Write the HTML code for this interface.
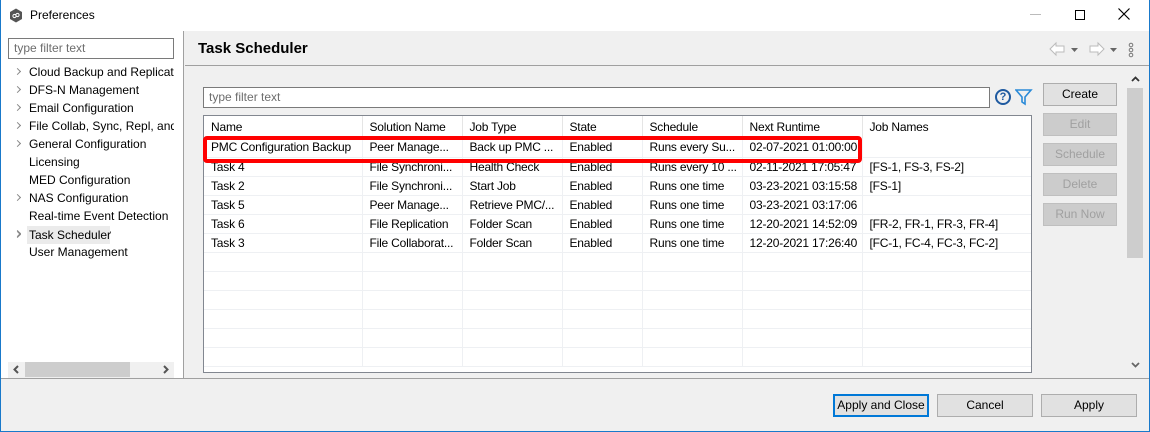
<!DOCTYPE html><html><head><style>
*{box-sizing:border-box;margin:0;padding:0}
body{width:1150px;height:432px;overflow:hidden;font-family:"Liberation Sans",sans-serif;font-size:12px;color:#000;background:#f0f0f0;position:relative}
.a{position:absolute}
.btn{position:absolute;background:#e1e1e1;border:1px solid #adadad;text-align:center;line-height:20px;font-size:12px}
.dis{color:#a0a0a0;background:#cccccc;border-color:#bfbfbf}
.tree div{height:18px;line-height:18px;padding-left:29px;position:relative;white-space:nowrap}
.tree .c:before{content:"";position:absolute;left:15px;top:6px;width:4px;height:4px;border-right:1px solid #888;border-top:1px solid #888;transform:rotate(45deg)}
table{border-collapse:collapse;table-layout:fixed}
td{height:19px;padding-left:7px;white-space:nowrap;overflow:hidden;border-right:1px solid #eef0f3;border-bottom:1px solid #eef0f3;font-size:12px;letter-spacing:-0.2px}
th{height:22px;padding-left:7px;text-align:left;font-weight:normal;border-right:1px solid #e5e5e5;letter-spacing:-0.2px;vertical-align:middle}
</style></head><body>
<div class="a" style="left:0;top:0;width:1150px;height:432px;border:1px solid #1979ca;border-top:none"></div>
<div class="a" style="left:1px;top:0;width:1148px;height:31px;background:#fff"></div>
<svg class="a" style="left:9px;top:8px" width="14" height="15"><path d="M7 0.5l6 3.5v7l-6 3.5l-6-3.5v-7z" fill="#555"/><circle cx="5.5" cy="8" r="1.6" fill="none" stroke="#fff"/><circle cx="8.5" cy="7" r="1.6" fill="none" stroke="#fff"/></svg>
<div class="a" style="left:30px;top:8px;font-size:12px">Preferences</div>
<div class="a" style="left:1030px;top:14px;width:11px;height:1px;background:#bbb"></div>
<div class="a" style="left:1075px;top:10px;width:10px;height:10px;border:1px solid #000"></div>
<svg class="a" style="left:1118px;top:8px" width="12" height="12"><path d="M0.5 0.5l11 11M11.5 0.5l-11 11" stroke="#000" stroke-width="1.2"/></svg>
<!-- left panel -->
<div class="a" style="left:1px;top:31px;width:183px;height:347px;background:#fff;border-right:1px solid #a0a0a0"></div>
<div class="a" style="left:8px;top:38px;width:166px;height:21px;border:1px solid #7a7a7a;color:#6d6d6d;padding-left:5px;line-height:19px">type filter text</div>
<div class="a tree" style="left:0;top:63px;width:174px;overflow:hidden">
<div class="c">Cloud Backup and Replicati</div><div class="c">DFS-N Management</div><div class="c">Email Configuration</div><div class="c">File Collab, Sync, Repl, and</div><div class="c">General Configuration</div><div>Licensing</div><div>MED Configuration</div><div class="c">NAS Configuration</div><div>Real-time Event Detection</div><div class="c">Task Scheduler</div><div>User Management</div></div>
<div class="a" style="left:27px;top:226px;width:83px;height:18px;background:#ebebeb"></div>
<div class="a tree" style="left:0;top:226px"><div class="c">Task Scheduler</div></div>
<div class="a" style="left:8px;top:362px;width:166px;height:16px;background:#f0f0f0"></div>
<div class="a" style="left:25px;top:362px;width:105px;height:15px;background:#cdcdcd"></div>
<svg class="a" style="left:13px;top:365px" width="6" height="9"><path d="M5 1L1.5 4.5L5 8" fill="none" stroke="#555" stroke-width="2"/></svg>
<svg class="a" style="left:163px;top:365px" width="6" height="9"><path d="M1 1L4.5 4.5L1 8" fill="none" stroke="#555" stroke-width="2"/></svg>
<!-- right header -->
<div class="a" style="left:185px;top:65px;width:964px;height:1px;background:#a0a0a0"></div>
<div class="a" style="left:198px;top:40px;font-size:15px;font-weight:bold">Task Scheduler</div>
<svg class="a" style="left:1048px;top:41px" width="80" height="16"><path d="M2 8l6-6v3h8v6h-8v3z" fill="#fff" stroke="#bbb"/><path d="M23 7h7l-3.5 4z" fill="#666"/><path d="M56 8l-6-6v3h-8v6h8v3z" fill="#fff" stroke="#bbb"/><path d="M62 7h7l-3.5 4z" fill="#666"/></svg>
<svg class="a" style="left:1128px;top:42px" width="6" height="16"><circle cx="3" cy="3" r="1.8" fill="none" stroke="#777"/><circle cx="3" cy="8" r="1.8" fill="none" stroke="#777"/><circle cx="3" cy="13" r="1.8" fill="none" stroke="#777"/></svg>
<!-- filter -->
<div class="a" style="left:203px;top:87px;width:787px;height:21px;background:#fff;border:1px solid #7a7a7a;color:#6d6d6d;padding-left:5px;line-height:19px">type filter text</div>
<div class="a" style="left:995px;top:89px;width:16px;height:16px;border:2px solid #1f5aa0;border-radius:50%;color:#1f5aa0;font-weight:bold;font-size:11px;text-align:center;line-height:12px">?</div>
<svg class="a" style="left:1015px;top:88px" width="18" height="18"><path d="M1 2h15l-6 7v7l-3-2v-5z" fill="none" stroke="#2a8ad8" stroke-width="1.6"/></svg>
<!-- table -->
<div class="a" style="left:203px;top:115px;width:829px;height:258px;background:#fff;border:1px solid #828790;overflow:hidden">
<table style="width:827px"><colgroup><col style="width:158px"><col style="width:100px"><col style="width:100px"><col style="width:80px"><col style="width:100px"><col style="width:120px"><col style="width:169px"></colgroup>
<tr><th>Name</th><th>Solution Name</th><th>Job Type</th><th>State</th><th>Schedule</th><th>Next Runtime</th><th>Job Names</th></tr>
<tr><td>PMC Configuration Backup</td><td>Peer Manage...</td><td>Back up PMC ...</td><td>Enabled</td><td>Runs every Su...</td><td>02-07-2021 01:00:00</td><td></td></tr>
<tr><td>Task 4</td><td>File Synchroni...</td><td>Health Check</td><td>Enabled</td><td>Runs every 10 ...</td><td>02-11-2021 17:05:47</td><td>[FS-1, FS-3, FS-2]</td></tr>
<tr><td>Task 2</td><td>File Synchroni...</td><td>Start Job</td><td>Enabled</td><td>Runs one time</td><td>03-23-2021 03:15:58</td><td>[FS-1]</td></tr>
<tr><td>Task 5</td><td>Peer Manage...</td><td>Retrieve PMC/...</td><td>Enabled</td><td>Runs one time</td><td>03-23-2021 03:17:06</td><td></td></tr>
<tr><td>Task 6</td><td>File Replication</td><td>Folder Scan</td><td>Enabled</td><td>Runs one time</td><td>12-20-2021 14:52:09</td><td>[FR-2, FR-1, FR-3, FR-4]</td></tr>
<tr><td>Task 3</td><td>File Collaborat...</td><td>Folder Scan</td><td>Enabled</td><td>Runs one time</td><td>12-20-2021 17:26:40</td><td>[FC-1, FC-4, FC-3, FC-2]</td></tr>
<tr><td></td><td></td><td></td><td></td><td></td><td></td><td></td></tr>
<tr><td></td><td></td><td></td><td></td><td></td><td></td><td></td></tr>
<tr><td></td><td></td><td></td><td></td><td></td><td></td><td></td></tr>
<tr><td></td><td></td><td></td><td></td><td></td><td></td><td></td></tr>
<tr><td></td><td></td><td></td><td></td><td></td><td></td><td></td></tr>
<tr><td></td><td></td><td></td><td></td><td></td><td></td><td></td></tr>
</table></div>
<div class="a" style="left:203px;top:136px;width:659px;height:27px;border:4px solid #f00;border-radius:4px"></div>
<!-- side buttons -->
<div class="btn" style="left:1043px;top:83px;width:74px;height:23px">Create</div>
<div class="btn dis" style="left:1043px;top:113px;width:74px;height:23px">Edit</div>
<div class="btn dis" style="left:1043px;top:143px;width:74px;height:23px">Schedule</div>
<div class="btn dis" style="left:1043px;top:173px;width:74px;height:23px">Delete</div>
<div class="btn dis" style="left:1043px;top:203px;width:74px;height:23px">Run Now</div>
<!-- vscroll -->
<div class="a" style="left:1127px;top:88px;width:16px;height:170px;background:#cdcdcd"></div>
<svg class="a" style="left:1131px;top:76px" width="9" height="6"><path d="M1 5L4.5 1.5L8 5" fill="none" stroke="#333" stroke-width="1.8"/></svg>
<svg class="a" style="left:1131px;top:362px" width="9" height="6"><path d="M1 1L4.5 4.5L8 1" fill="none" stroke="#666" stroke-width="1.8"/></svg>
<!-- bottom -->
<div class="a" style="left:1px;top:378px;width:1148px;height:1px;background:#a0a0a0"></div>
<div class="btn" style="left:833px;top:394px;width:96px;height:23px;border:2px solid #0078d7;line-height:19px">Apply and Close</div>
<div class="btn" style="left:937px;top:394px;width:96px;height:23px">Cancel</div>
<div class="btn" style="left:1041px;top:394px;width:96px;height:23px">Apply</div>
</body></html>
